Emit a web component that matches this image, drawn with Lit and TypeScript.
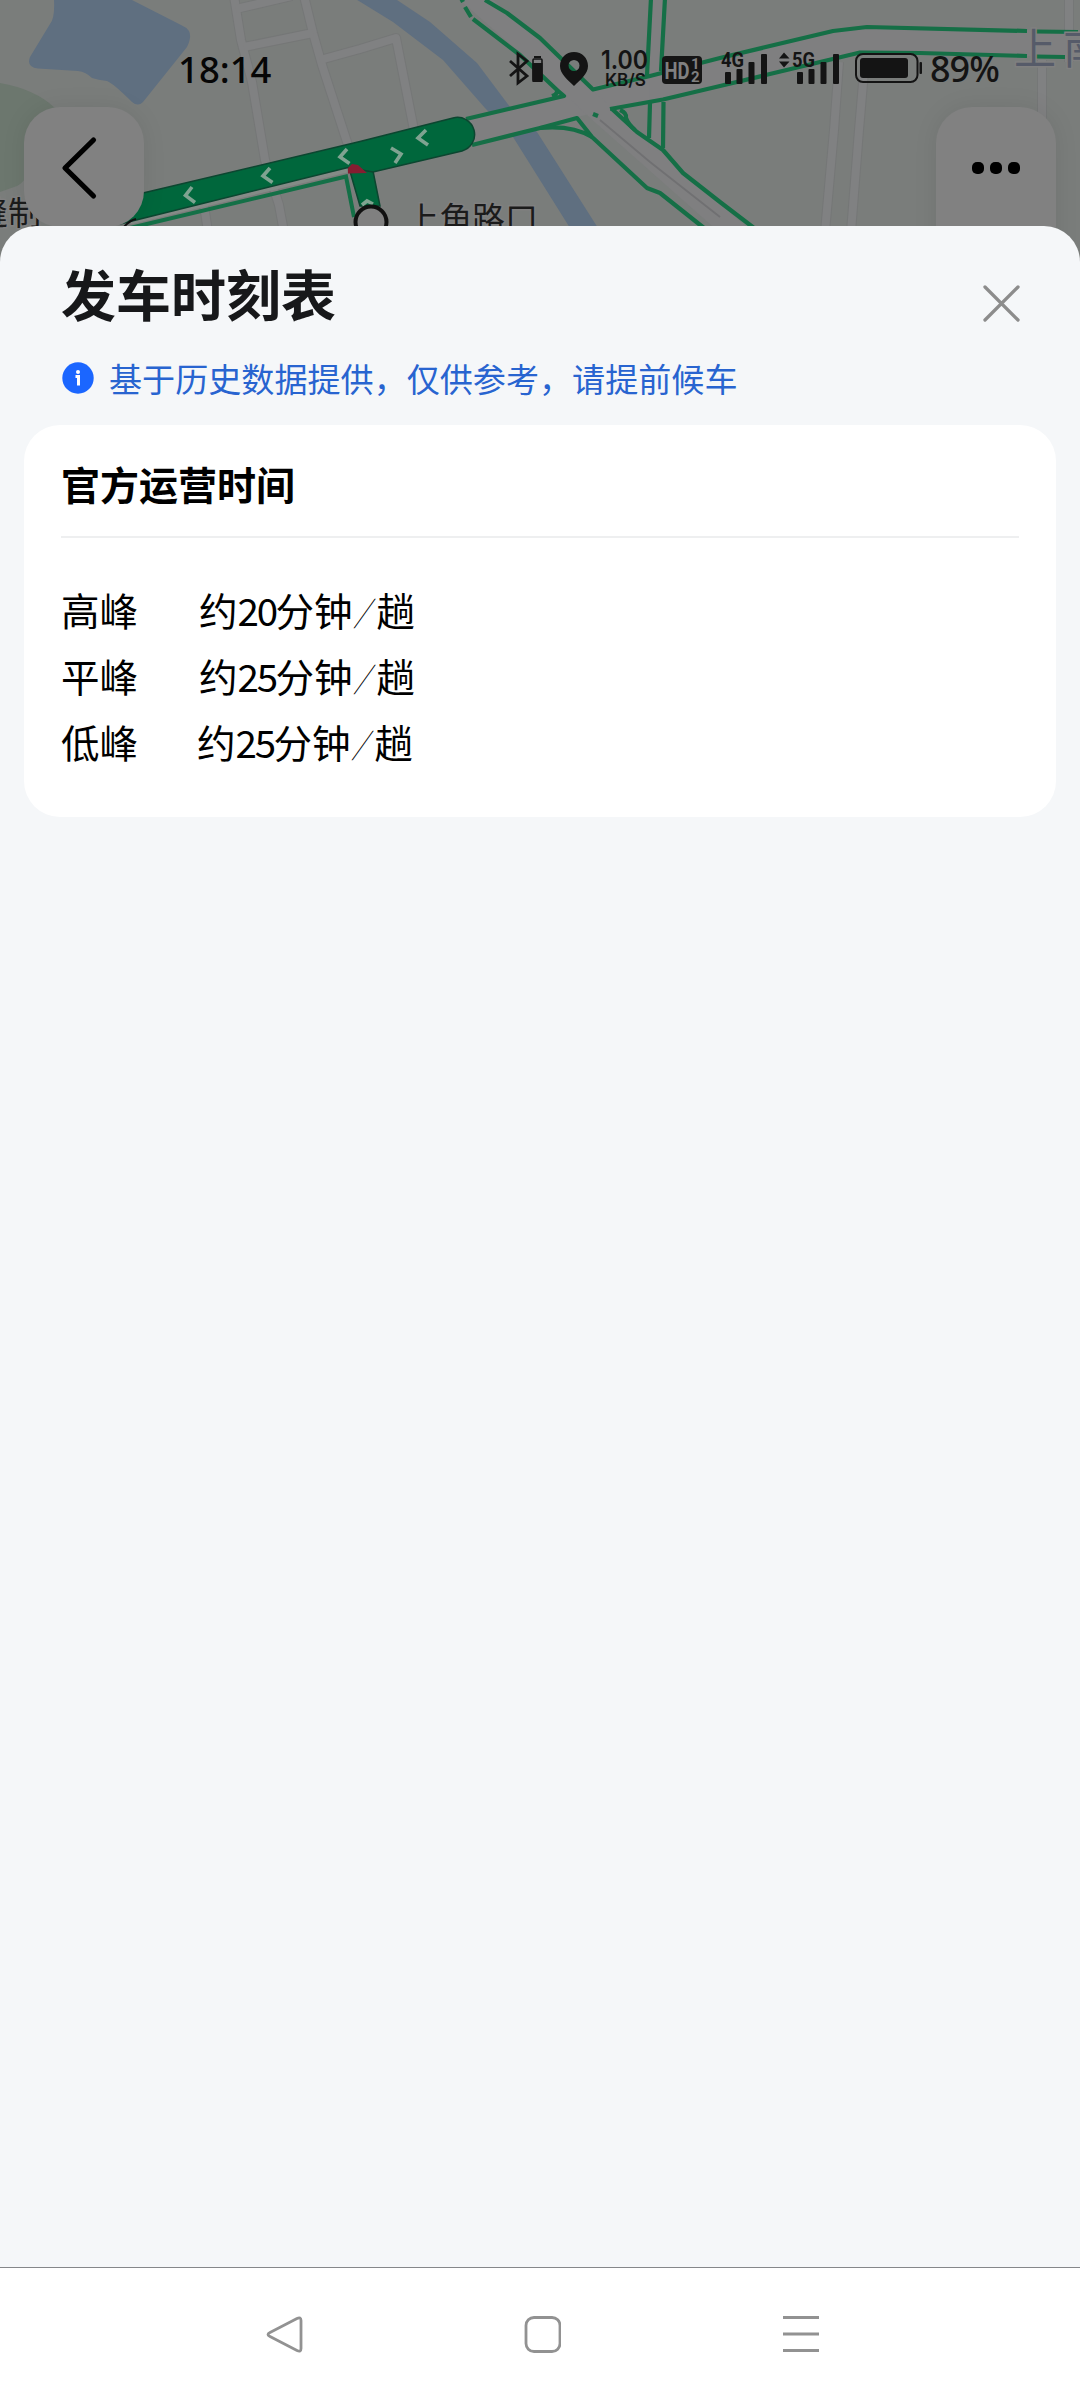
import { LitElement, html, svg, css } from "lit";
import { customElement } from "lit/decorators.js";

const CJK = css`"Noto Sans CJK SC", sans-serif`;

@customElement("map-canvas")
class MapCanvas extends LitElement {
  static styles = css`
    :host { display: block; width: 1080px; height: 270px; }
    svg { display: block; }
    text { font-family: ${CJK}; }
    .road { fill: none; stroke: #757777; stroke-width: 10; stroke-linejoin: round; }
    .road-in { fill: none; stroke: #808182; stroke-width: 8; stroke-linejoin: round; }
    .main { fill: none; stroke: #7f7f80; stroke-linejoin: round; }
    .green { fill: none; stroke: #156f46; stroke-width: 4.2; stroke-linejoin: round; }
    .water { fill: #5f6f80; }
    .chev { fill: none; stroke: #7fa391; stroke-width: 3.6; }
    .label { font-size: 33px; fill: #1b1b1b; stroke: #808080; stroke-width: 3px; paint-order: stroke; }
    .area { font-size: 42px; fill: #565b69; stroke: #808080; stroke-width: 3px; paint-order: stroke; }
  `;

  private minorRoads = [
    "M234 -4L241 40L252 82L265 160L279 205L284 232",
    "M304 -4L313 33L322 65L348 145",
    "M236 9L292 -4",
    "M244 47L313 33",
    "M320 60L360 49L396 38L414 130",
    "M204 205L208 232",
    "M839 62L834 130L825 232",
    "M865 60L859 130L851 232",
    "M1042 60V232",
    "M1069 -4V62",
  ];

  private trafficLines = [
    "M485 0L507 13L540 38L593 89.5L650 76L720 58L833 31L867 27L1027 31M1036 31.5L1078 32",
    "M461 -2L463 2M465 7L471 17M473 19L520 55L557 90Q558 94 552 96M557 90L564 96L466 119",
    "M472 145L540 128L577 118L592 137L647 188L660 193L704 228",
    "M540 128Q572 125 592 137",
    "M610 109L663 99.5L720 86L860 52.5L920 53L1027 56M1036 56.5L1065 57",
    "M612 109L637 132L663 150L683 173L720 202L754 228",
    "M620 110Q627 113 626 118Q628 124 635 130",
    "M651 -2L647 75M665 -2L661 71M650 103L649 138M663.500 102L663 148",
    "M593 114L598 116",
  ];

  render() {
    return html`<svg width="1080" height="270" viewBox="0 0 1080 270">
      <rect width="1080" height="270" fill="#7a7d7b"/>
      <path d="M0 83Q35 89 55 108Q34 178 17 186L0 192Z" fill="#6c776e"/>
      <path class="water" d="M54 0Q55 18 50 24L30 57Q26 67 38 68.500L78 71Q86 72 92 78Q98 80 107 81Q114 84 132 102Q138 107 143 102L187 47Q192 37 189 31Q186 27 181 25L130 -1Z"/>
      ${this.minorRoads.map((d) => svg`<path class="road" d=${d}/>`)}
      ${this.minorRoads.map((d) => svg`<path class="road-in" d=${d}/>`)}
      <path class="water" d="M354 -2L393 22L443 60L485 108L513 137L570 228H598L537 132L510 107L477 63L430 22L394 -2Z"/>
      <path class="main" stroke-width="26" d="M440 138L600 98L720 72L860 40L1080 44"/>
      <path class="main" stroke-width="22" d="M470 -6L530 47L600 112L660 165L740 236"/>
      <path class="main" stroke-width="14" d="M658 -2L655 150"/>
      <path d="M600 120L650 162L720 217" fill="none" stroke="#707072" stroke-width="1.800"/>
      ${this.trafficLines.map((d) => svg`<path class="green" d=${d}/>`)}

      <path d="M130 222L347 170" fill="none" stroke="#858b87" stroke-width="5"/>
      <path d="M130 228L346 176.500L354 217" fill="none" stroke="#147047" stroke-width="4"/>
      <path d="M349 168L373 171L380 206H360Z" fill="#00673c" stroke="#0c4630" stroke-width="1.500"/>
      <path d="M120 199L143 193L360 141.500L453 118A17 17 0 0 1 462 151L373 172L348 167.500L120 224Z" fill="#00673c" stroke="#0c4630" stroke-width="1.500"/>
      <path d="M348 168L352 164L358 165L367 173L348 173.500Z" fill="#861d31"/>
      <path class="chev" d="M192 187L185.500 195.500L195 202.500M270 168L263 176L272.500 182.500M347 149L340 157L349.500 163.500M426 130L418 138L428 145M391 148L401 154L395 163M362 205L367 201L373 204"/>
      <path d="M124 227Q130 220 136 219" fill="none" stroke="#111" stroke-width="2"/>
      <circle cx="371" cy="222" r="15.500" fill="#808080" stroke="#111" stroke-width="4"/>
      <text class="label" x="406" y="230.500">上角路口</text>
      <text class="label" x="-25" y="224.500">缝制</text>
      <text class="area" x="1014" y="64" letter-spacing="7">上南</text>
    </svg>`;
  }
}

@customElement("status-bar")
class StatusBar extends LitElement {
  static styles = css`
    :host { display: flex; align-items: center; height: 100px; margin-top: 19px; padding: 0 78px 0 178px; box-sizing: border-box;
      font-family: "Noto Sans", "Open Sans", sans-serif; color: #141414; margin-bottom: -12px; }
    .time { font-size: 36.5px; line-height: 40px; font-weight: 500; color: #060606; margin-right: auto; }
    .icons { display: block; flex: none; }
    .pct { font-size: 36px; line-height: 40px; font-weight: 500; width: 72px; margin-left: 7px; letter-spacing: -1px; white-space: nowrap; }
    .speed { font: 600 25px/20px "Inter", sans-serif; }
    .unit { font: 600 17px/18px "Inter", sans-serif; }
    .net { font: 700 20px/18px "Roboto", sans-serif; }
    text { fill: #141414; }
    .hd { font: 700 24px/24px "Roboto", sans-serif; fill: #808080; }
    .sub { font: 700 15px/15px "Roboto", sans-serif; fill: #808080; }
  `;
  render() {
    return html`
      <span class="time">18:14</span>
      <svg class="icons" width="416" height="44" viewBox="507 47 416 44">
        <path d="M510 61L527 76L518 83V54L527 61L510 76" fill="none" stroke="#141414" stroke-width="2.800"/>
        <path d="M534 56H541V58H534Z" fill="#141414"/>
        <rect x="533" y="59" width="9" height="22" rx="1" fill="none" stroke="#141414" stroke-width="1.600"/>
        <rect x="532.500" y="63" width="10" height="19" fill="#141414"/>
        <path fill-rule="evenodd" fill="#141414" d="M574 52C566 52 560 58 560 66C560 74 568 80 574 86C580 80 588 74 588 66C588 58 582 52 574 52ZM574 60A5.500 5.500 0 1 1 574 71A5.500 5.500 0 1 1 574 60Z"/>
        <text class="speed" x="601" y="68.500" textLength="47" lengthAdjust="spacingAndGlyphs">1.00</text>
        <text class="unit" x="605" y="86" textLength="41" lengthAdjust="spacingAndGlyphs">KB/S</text>
        <rect x="662" y="56" width="40" height="28" rx="4" fill="#151515"/>
        <text class="hd" x="664.500" y="78.500" textLength="25" lengthAdjust="spacingAndGlyphs">HD</text>
        <text class="sub" x="691" y="69">1</text>
        <text class="sub" x="691" y="82">2</text>
        <text class="net" x="721" y="67" textLength="23" lengthAdjust="spacingAndGlyphs">4G</text>
        <text class="net" x="792" y="67" textLength="23" lengthAdjust="spacingAndGlyphs">5G</text>
        ${[725, 797].map((x) => svg`
          <rect x=${x} y="72" width="6" height="12" rx="1" fill="#141414"/>
          <rect x=${x + 11.5} y="69" width="6" height="15" rx="1" fill="#141414"/>
          <rect x=${x + 23.5} y="62" width="6" height="22" rx="1" fill="#141414"/>
          <rect x=${x + 36} y="54" width="6" height="30" rx="1" fill="#141414"/>`)}
        <path d="M779 58.500L784 52.500L789.500 58.500ZM779 61.500L784 67.500L789.500 61.500Z" fill="#141414"/>
        <rect x="856" y="54" width="61.500" height="28" rx="7" fill="none" stroke="#141414" stroke-width="2"/>
        <rect x="860" y="58" width="48" height="20" rx="3" fill="#141414"/>
        <rect x="919.500" y="62" width="2.500" height="12" rx="1" fill="#141414"/>
      </svg>
      <span class="pct">89%</span>`;
  }
}

@customElement("timetable-sheet")
class TimetableSheet extends LitElement {
  static styles = css`
    :host { display: flex; flex-direction: column; box-sizing: border-box; background: #f5f7f9; border-radius: 36px 36px 0 0;
      padding: 34px 24px 0; font-family: ${CJK}; color: #000; }
    .head { display: flex; justify-content: space-between; align-items: center; height: 64px; padding: 0 36px 0 37px; }
    .title { margin: 0; font-size: 55px; line-height: 64px; font-weight: 700; color: #17181a; }
    .close { display: block; margin-top: 23px; }
    .note { display: flex; align-items: center; height: 40px; margin-top: 34px; padding-left: 38px; gap: 15px;
      color: #2864d0; font-size: 33.1px; line-height: 40px; white-space: nowrap; }
    .note svg { display: block; }
    .card { background: #fff; border-radius: 36px; margin-top: 27px; height: 392px; padding: 0 37px; box-sizing: border-box; }
    .card-title { margin: 0; height: 111px; border-bottom: 2px solid #eeeff0; font-size: 39px; line-height: 117px; font-weight: 700; }
    .rows { padding-top: 38px; }
    .row { display: flex; height: 66px; line-height: 66px; font-size: 38.5px; white-space: nowrap; }
    .peak { width: 138px; }
    .row:last-child .peak { width: 136px; }
    .num { display: inline-block; width: 38px; letter-spacing: -2.2px; }
    .slash { display: inline-block; width: 24px; text-align: center; font-family: "Roboto", sans-serif; font-weight: 100; transform: skewX(-18deg); }
  `;
  private rows = [["高峰", "20"], ["平峰", "25"], ["低峰", "25"]];
  render() {
    return html`
      <div class="head">
        <h1 class="title">发车时刻表</h1>
        <svg class="close" width="37" height="37" viewBox="0 0 37 37"><path d="M2 2L35 35M35 2L2 35" stroke="#8c8c8c" stroke-width="3.300" stroke-linecap="round"/></svg>
      </div>
      <div class="note">
        <svg width="32" height="32" viewBox="0 0 32 32"><circle cx="16" cy="16" r="15.700" fill="#1b66ff"/><circle cx="16" cy="10" r="2" fill="#fff"/><path d="M13.500 14.500H16.500V23.500" fill="none" stroke="#fff" stroke-width="3"/></svg>
        <span>基于历史数据提供，仅供参考，请提前候车</span>
      </div>
      <section class="card">
        <h2 class="card-title">官方运营时间</h2>
        <div class="rows">
          ${this.rows.map(([name, n]) => html`<div class="row"><span class="peak">${name}</span><span>约<span class="num">${n}</span>分钟<span class="slash">/</span>趟</span></div>`)}
        </div>
      </section>`;
  }
}

@customElement("app-root")
class AppRoot extends LitElement {
  static styles = css`
    :host { display: block; }
    .screen { display: flex; flex-direction: column; width: 1080px; height: 2400px; overflow: hidden; background: #7a7d7b; position: relative; }
    .map { position: absolute; top: 0; left: 0; }
    .top { position: relative; height: 226px; flex: none; overflow: visible; display: flow-root; }
    .buttons { display: flex; justify-content: space-between; align-items: flex-start; padding: 0 24px; }
    .btn { display: block; width: 120px; height: 120px; border-radius: 36px; background: #818181; box-shadow: 0 0 24px rgba(0, 0, 0, 0.08); }
    .btn.tall { height: 180px; }
    .sheet { position: relative; flex: 1; }
    .nav { position: relative; display: flex; justify-content: center; gap: 221px; height: 133px; box-sizing: border-box; flex: none;
      border-top: 1px solid #85878a; background: #fff; padding: 47px 0 0 4px; }
    .nav svg { display: block; width: 37px; height: 38px; fill: none; stroke: #929292; stroke-width: 2.8; }
  `;
  render() {
    return html`<main class="screen">
      <map-canvas class="map"></map-canvas>
      <div class="top">
        <status-bar></status-bar>
        <div class="buttons">
          <svg class="btn" viewBox="0 0 120 120"><path d="M69.500 33L41 61L69.500 89" fill="none" stroke="#000" stroke-width="5.200" stroke-linecap="round" stroke-linejoin="round"/></svg>
          <svg class="btn tall" viewBox="0 0 120 180"><rect x="36" y="55" width="12" height="12" rx="5"/><rect x="54" y="55" width="12" height="12" rx="5"/><rect x="72" y="55" width="12" height="12" rx="5"/></svg>
        </div>
      </div>
      <timetable-sheet class="sheet"></timetable-sheet>
      <nav class="nav">
        <svg viewBox="0 0 37 38"><path d="M31 3.500Q35 1.500 35 5.500V33.500Q35 37.500 31 35.500L4 21.500Q0 19.500 4 17.500Z"/></svg>
        <svg viewBox="0 0 37 38"><rect x="2" y="2.500" width="34" height="34" rx="8"/></svg>
        <svg viewBox="0 0 37 38"><path d="M1 2.500H37M1 19H37M1 35.500H37"/></svg>
      </nav>
    </main>`;
  }
}
